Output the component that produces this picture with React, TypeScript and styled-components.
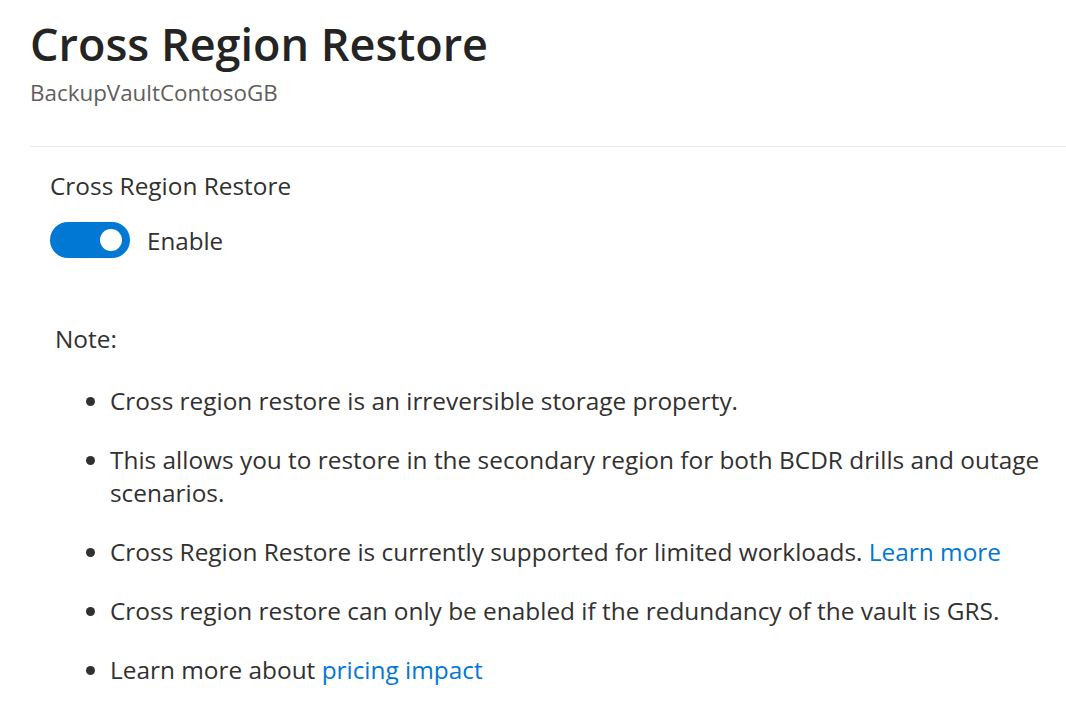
import styled, { createGlobalStyle } from "styled-components";

const Global = createGlobalStyle`
body{
    margin:0;
    background:#fff;
    font-family:"Open Sans", "Noto Sans", sans-serif;
    color:#323130;
}
`;
const Page = styled.div`
padding: 16px 0 0 30px;
`;
const Header = styled.header`
padding-bottom: 38px;
border-bottom: 1px solid #edebe9;
`;
const Title = styled.h1`
margin:0;
font-size: 45px;
line-height: 56px;
font-weight: 600;
color:#242424;
`;
const Subtitle = styled.div`
margin-top: 6px;
font-size: 22.4px;
line-height: 30px;
color:#605e5c;
`;
const Section = styled.section`
padding: 23px 20px 0;
`;
const Label = styled.div`
font-size: 24.4px;
line-height: 32px;
`;
const ToggleRow = styled.label`
display:flex;
align-items:center;
gap: 17px;
margin-top: 20px;
font-size: 24.2px;
`;
const Switch = styled.span<{ $on: boolean }>`
position: relative;
width: 80px;
height: 36px;
border-radius: 18px;
background: ${(p) => (p.$on ? "#0078d4" : "#fff")};
span{
    position:absolute;
    top: 7px;
    left: ${(p) => (p.$on ? "50px" : "8px")};
    width: 22px;
    height: 22px;
    border-radius: 50%;
    background:#fff;
}
`;
const Note = styled.div`
margin: 64px 0 0 5px;
font-size: 24.4px;
line-height: 34px;
`;
const List = styled.ul`
margin: 28px 0 0;
padding: 0 0 0 60px;
font-size: 24.4px;
line-height: 33px;
li{
    margin-bottom: 26px;
}
a{
    color:#0078d4;
    text-decoration:none;
}
`;

function App(){
    return (
        <Page>
            <Global />
            <Header>
                <Title>Cross Region Restore</Title>
                <Subtitle>BackupVaultContosoGB</Subtitle>
            </Header>
            <Section>
                <Label>Cross Region Restore</Label>
                <ToggleRow>
                    <Switch $on={true}><span /></Switch>
                    Enable
                </ToggleRow>
                <Note>Note:</Note>
                <List>
                    <li>Cross region restore is an irreversible storage property.</li>
                    <li>This allows you to restore in the secondary region for both BCDR drills and outage scenarios.</li>
                    <li>Cross Region Restore is currently supported for limited workloads. <a href="#">Learn more</a></li>
                    <li>Cross region restore can only be enabled if the redundancy of the vault is GRS.</li>
                    <li>Learn more about <a href="#">pricing impact</a></li>
                </List>
            </Section>
        </Page>
    );
}

export default App;
